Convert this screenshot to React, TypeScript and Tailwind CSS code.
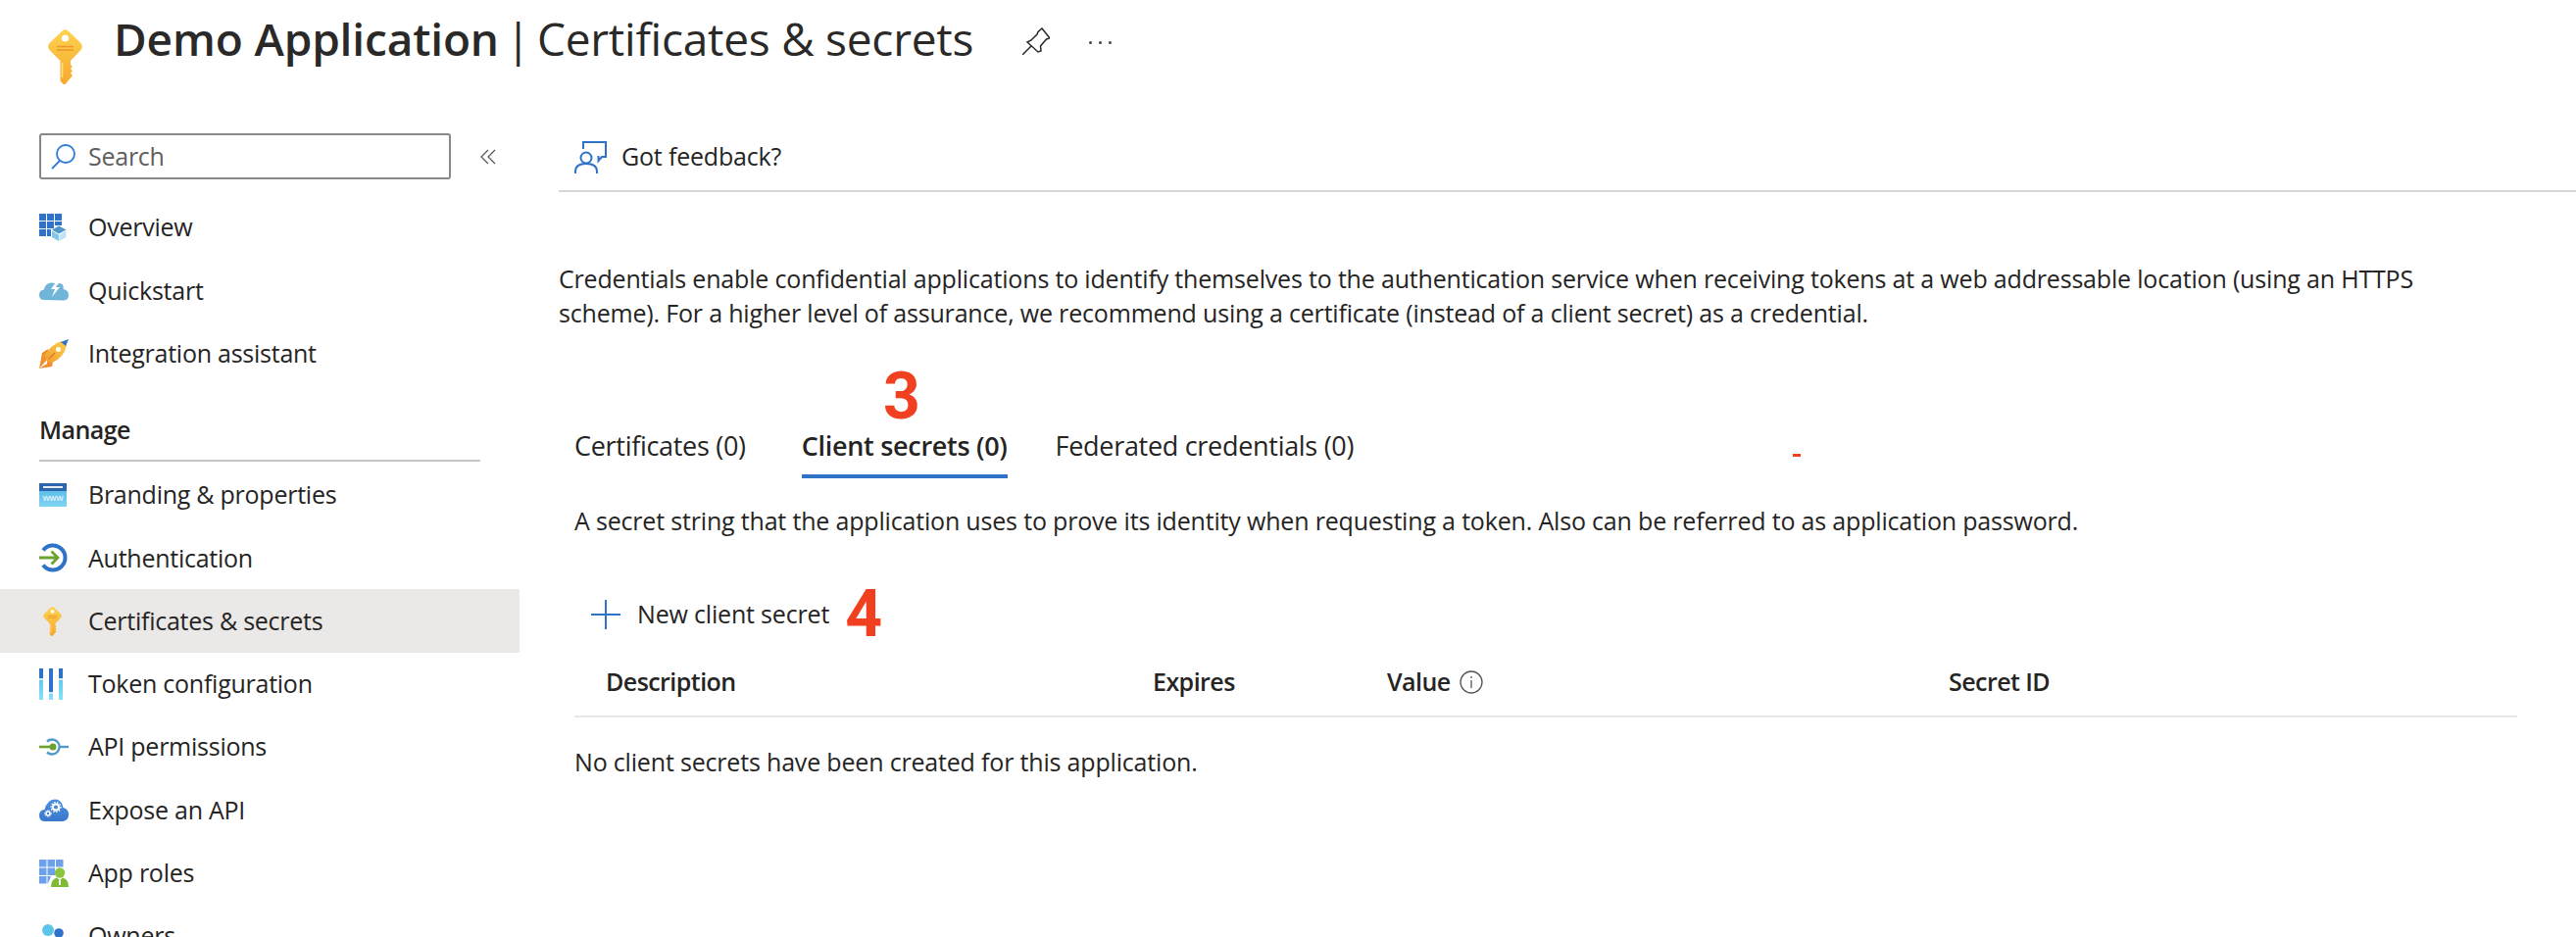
import React from "react";

function KeyIcon(props: { className: string }) {
  return (
    <svg className={props.className} viewBox="0 0 35 56">
      <defs>
        <linearGradient id="keyBody" x1="0" y1="0" x2="0" y2="1">
          <stop offset="0" stopColor="#fcd34f" />
          <stop offset="1" stopColor="#f7a72c" />
        </linearGradient>
      </defs>
      <path
        d="M12.500 52.500V32L2 21.500q-3.500-4 0-8L14.500 1.500q3-2.500 6 0L33 13.500q3.500 4 0 8L23 32v4l2 2-2 2 2 2.500-2 2 2 2.500-7.500 9q-1 .8-2 0z"
        fill="url(#keyBody)"
      />
      <circle cx="17.500" cy="9" r="3.600" fill="#fff" />
      <path d="M9 17.500h17M9 21h17" stroke="#f0962c" strokeWidth="1.500" />
      <path d="M14.500 34v15" stroke="#fde08a" strokeWidth="1.500" />
    </svg>
  );
}

function OverviewIcon() {
  return (
    <svg className="w-[28px] h-[28px]" viewBox="0 0 28 28">
      <path
        d="M0 0h7v7H0zM8 0h7v7H8zM16 0h7v7h-7zM0 8h7v7H0zM8 8h7v7H8zM16 8h7v4h-7zM0 16h7v7H0zM8 16h4v7H8z"
        fill="#2f73c8"
      />
      <path d="M13 16.500l7-4 7.500 4-7.500 4z" fill="#4f97c8" />
      <path d="M13 17.500l7 4V28l-7-4z" fill="#83c6e6" />
      <path d="M27.500 17.500l-7 4V28l7-4z" fill="#bfe5f5" />
    </svg>
  );
}

function QuickstartIcon() {
  return (
    <svg className="w-[30px] h-[22px]" viewBox="0 0 30 22">
      <path
        d="M5 21q-5 0-5-5t5-5.500Q6 4 12 3.500q4-.3 6 2 3-3 6 0 1 2 .5 4.500 5.500 1 5.500 6t-5 5.500z"
        fill="#70b4d8"
      />
      <path d="M19 0l-7 10h4l-3 8 8-10h-4l4-7z" fill="#fff" />
    </svg>
  );
}

function RocketIcon() {
  return (
    <svg className="w-[30px] h-[30px]" viewBox="0 0 30 30">
      <defs>
        <linearGradient id="rocketBody" x1="0" y1="1" x2="1" y2="0">
          <stop offset="0" stopColor="#f29a2e" />
          <stop offset="1" stopColor="#fbd24a" />
        </linearGradient>
      </defs>
      <path d="M9 10L3 14 0 30l8-5zM20 20l-6 3-1 5-13 2 8-9z" fill="#f08f2c" />
      <path d="M5 17Q12 6 22 2l6 4q-2 12-15 18l-3 0z" fill="url(#rocketBody)" />
      <path d="M22 3l8-3-3 7z" fill="#2f73c8" />
      <circle cx="19.500" cy="10.500" r="2.500" fill="#fff" />
      <path d="M10 20l6-6" stroke="#d8762a" strokeWidth="1.200" />
    </svg>
  );
}

function BrandingIcon() {
  return (
    <svg className="w-[28px] h-[24px]" viewBox="0 0 28 24">
      <defs>
        <linearGradient id="brandBody" x1="0" y1="0" x2="0" y2="1">
          <stop offset="0" stopColor="#4fb4e4" />
          <stop offset="1" stopColor="#7fd4f2" />
        </linearGradient>
      </defs>
      <rect width="28" height="24" fill="url(#brandBody)" />
      <rect width="28" height="8" fill="#2e66ad" />
      <rect x="4" y="3" width="20" height="2" fill="#e6eef8" />
      <text x="14" y="18" textAnchor="middle" fontSize="9" fill="#fff" fontFamily="Open Sans, sans-serif">
        www
      </text>
    </svg>
  );
}

function AuthIcon() {
  return (
    <svg className="w-[30px] h-[30px]" viewBox="0 0 30 30">
      <path d="M4 7.500A12.500 12.500 0 1 1 4 22.500" fill="none" stroke="#2f73c8" strokeWidth="4" />
      <path d="M0 15h19M12.500 8.500L19 15l-6.500 6.500" fill="none" stroke="#6ba331" strokeWidth="2.800" />
    </svg>
  );
}

function TokenIcon() {
  return (
    <svg className="w-[25px] h-[32px]" viewBox="0 0 25 32">
      <defs>
        <linearGradient id="tokenLow" x1="0" y1="0" x2="0" y2="1">
          <stop offset="0" stopColor="#4fb9e2" />
          <stop offset="1" stopColor="#88e0f8" />
        </linearGradient>
      </defs>
      <rect x="0" y="0" width="4" height="32" fill="url(#tokenLow)" />
      <rect x="10" y="0" width="4" height="32" fill="url(#tokenLow)" />
      <rect x="20" y="0" width="4" height="32" fill="url(#tokenLow)" />
      <rect x="0" y="0" width="4" height="11" fill="#2f73c8" />
      <rect x="10" y="0" width="4" height="24" fill="#2f73c8" />
      <rect x="20" y="0" width="4" height="11" fill="#2f73c8" />
      <rect x="0" y="10" width="4" height="2" fill="#cfeaf6" />
      <rect x="10" y="24" width="4" height="2" fill="#cfeaf6" />
      <rect x="20" y="10" width="4" height="2" fill="#cfeaf6" />
    </svg>
  );
}

function ApiIcon() {
  return (
    <svg className="w-[30px] h-[18px]" viewBox="0 0 30 18">
      <path d="M8 3.500A7.500 7.500 0 1 1 8 14.500" fill="none" stroke="#4f9ac9" strokeWidth="2.400" />
      <path d="M20 9h10" stroke="#4f9ac9" strokeWidth="2.400" />
      <path d="M0 9h12" stroke="#6ba331" strokeWidth="2.600" />
      <circle cx="14" cy="9" r="3.500" fill="#6ba331" />
    </svg>
  );
}

function ExposeIcon() {
  return (
    <svg className="w-[30px] h-[24px]" viewBox="0 0 30 24">
      <defs>
        <linearGradient id="exposeBody" x1="0" y1="0" x2="0" y2="1">
          <stop offset="0" stopColor="#4a90de" />
          <stop offset="1" stopColor="#3a78cc" />
        </linearGradient>
      </defs>
      <path d="M5 23q-5-.5-5-6t5.500-6Q8 1 16 .500q7 0 8.500 8.500 5.500 1.500 5.500 7t-5.500 7z" fill="url(#exposeBody)" />
      <circle cx="17" cy="8.500" r="3.200" fill="none" stroke="#fff" strokeWidth="2.200" />
      <circle cx="17" cy="8.500" r="5" fill="none" stroke="#fff" strokeWidth="1.200" strokeDasharray="1.500 1.500" />
      <circle cx="9" cy="15" r="2" fill="none" stroke="#fff" strokeWidth="1.600" />
      <circle cx="9" cy="15" r="3.300" fill="none" stroke="#fff" strokeWidth="1" strokeDasharray="1.200 1.200" />
    </svg>
  );
}

function AppRolesIcon() {
  return (
    <svg className="w-[30px] h-[28px]" viewBox="0 0 30 28">
      <path
        d="M0 0h7.500v7.500H0zM8.500 0H16v7.500H8.500zM17 0h7.500v7.500H17zM0 8.500h7.500V16H0zM8.500 8.500H16V16H8.500zM0 17h7.500v7.500H0zM8.500 17H12l-3 7.500H8.500z"
        fill="#6ea1ec"
      />
      <circle cx="21" cy="13.500" r="5.200" fill="#8cc63f" />
      <path d="M12 28q0-8 6-9.500l3 2.500 3-2.500q6 1.500 6 9.500z" fill="#7fb935" />
      <path d="M20 21h2v5h-2z" fill="#fff" />
    </svg>
  );
}

function OwnersIcon() {
  return (
    <svg className="w-[28px] h-[24px]" viewBox="0 0 28 24">
      <circle cx="9" cy="6" r="6" fill="#5bc5e8" />
      <path d="M0 24q0-9 9-10 9 1 9 10z" fill="#4db4e0" />
      <circle cx="20" cy="9" r="4.800" fill="#2f73c8" />
      <path d="M12 24q0-8 8-9 8 1 8 9z" fill="#2f73c8" />
    </svg>
  );
}

const topItems = [
  { label: "Overview", icon: <OverviewIcon /> },
  { label: "Quickstart", icon: <QuickstartIcon /> },
  { label: "Integration assistant", icon: <RocketIcon /> },
];

const manageItems = [
  { label: "Branding & properties", icon: <BrandingIcon /> },
  { label: "Authentication", icon: <AuthIcon /> },
  { label: "Certificates & secrets", icon: <KeyIcon className="w-[19px] h-[30px] ml-[4px]" />, active: true },
  { label: "Token configuration", icon: <TokenIcon /> },
  { label: "API permissions", icon: <ApiIcon /> },
  { label: "Expose an API", icon: <ExposeIcon /> },
  { label: "App roles", icon: <AppRolesIcon /> },
  { label: "Owners", icon: <OwnersIcon /> },
];

function NavRow(props: { label: string; icon: React.ReactNode; active?: boolean }) {
  return (
    <div
      className={
        props.active
          ? "flex items-center h-[64.3px] shrink-0 bg-[#ebe9e7] pl-[40px]"
          : "flex items-center h-[64.3px] shrink-0 pl-[40px]"
      }
    >
      <div className="w-[50px] flex items-center">{props.icon}</div>
      <span className="text-[25px] tracking-[-0.25px] text-[#252423]">{props.label}</span>
    </div>
  );
}

export default function App() {
  return (
    <div className="w-[2628px] h-[956px] overflow-hidden bg-white flex flex-col text-[#252423] tracking-[-0.18px] font-['Open_Sans',sans-serif]">
      <div className="h-[126px] shrink-0 flex items-start pl-[49px] pt-[14px]">
        <KeyIcon className="w-[35px] h-[56px] mt-[16px]" />
        <h1 className="ml-[32px] text-[46px] leading-[50px] text-[#2a2928] whitespace-nowrap flex">
          <span className="font-semibold tracking-[-0.15px]">Demo Application</span>
          <span className="ml-[7px] mr-[7px]">|</span>
          <span className="tracking-[-0.25px]">Certificates &amp; secrets</span>
        </h1>
        <svg className="w-[28px] h-[28px] ml-[50px] mt-[14px]" viewBox="0 0 28 28" fill="none" stroke="#2a2928" strokeWidth="1.500">
          <path d="M0 28l9-9M20 1l8 10-3.500 1-6 7 .5 5-3 1L5 15l4-2 6-6 1-2.500z" />
        </svg>
        <div className="ml-[40px] mt-[28px] flex gap-[7px]">
          <div className="w-[3px] h-[3px] rounded-full bg-[#444]" />
          <div className="w-[3px] h-[3px] rounded-full bg-[#444]" />
          <div className="w-[3px] h-[3px] rounded-full bg-[#444]" />
        </div>
      </div>

      <div className="flex flex-1 min-h-0">
        <div className="w-[530px] shrink-0 flex flex-col pt-[10px]">
          <div className="flex items-center pl-[40px] h-[47px] shrink-0">
            <div className="w-[420px] h-[47px] flex items-center border-2 border-[#8a8886] rounded-[3px] pl-[10px]">
              <svg className="w-[25px] h-[26px]" viewBox="0 0 25 26" fill="none" stroke="#2f7bd8" strokeWidth="1.800">
                <circle cx="15" cy="10" r="9" />
                <path d="M9 17L1 25" />
              </svg>
              <span className="ml-[13px] text-[25px] tracking-[-0.25px] text-[#605e5c]">Search</span>
            </div>
            <svg className="w-[16px] h-[16px] ml-[30px]" viewBox="0 0 16 16" fill="none" stroke="#555" strokeWidth="1.200">
              <path d="M8 1L1 8l7 7M15 1L8 8l7 7" />
            </svg>
          </div>
          <div className="h-[17px] shrink-0" />
          {topItems.map((item) => (
            <NavRow key={item.label} label={item.label} icon={item.icon} />
          ))}
          <div className="ml-[40px] mr-[40px] h-[78px] shrink-0 border-b-2 border-[#c8c6c4] flex items-end pb-[14px]">
            <span className="text-[25px] font-semibold leading-[34px] tracking-[-0.55px] text-[#252423]">Manage</span>
          </div>
          <div className="h-[2px] shrink-0" />
          {manageItems.map((item) => (
            <NavRow key={item.label} label={item.label} icon={item.icon} active={item.active} />
          ))}
        </div>

        <div className="flex-1 min-w-0 ml-[40px] flex flex-col">
          <div className="h-[70px] shrink-0 border-b-2 border-[#d6d6d6] flex items-center pl-[16px]">
            <svg className="w-[33px] h-[33px]" viewBox="0 0 33 33" fill="none" stroke="#2f73c8" strokeWidth="2">
              <path d="M9 8V1h23v15h-4l-3.500 4v-5" />
              <circle cx="12" cy="17" r="5.500" />
              <path d="M1 33v-2q0-8 11-8t11 8v2" />
            </svg>
            <span className="ml-[15px] text-[25px]">Got feedback?</span>
          </div>

          <p className="mt-[71px] text-[25px] leading-[35px] w-[1950px]">
            Credentials enable confidential applications to identify themselves to the authentication service when receiving tokens at a web addressable location (using an HTTPS
            <br />
            scheme). For a higher level of assurance, we recommend using a certificate (instead of a client secret) as a credential.
          </p>

          <div className="mt-[89px] ml-[16px] flex h-[70px] relative text-[27px] tracking-[-0.3px]">
            <div className="pt-[9px] leading-[40px]">Certificates (0)</div>
            <div className="ml-[57px] pt-[9px] leading-[40px] font-semibold border-b-4 border-[#2f73c8] h-[62px]">Client secrets (0)</div>
            <div className="ml-[49px] pt-[9px] leading-[40px]">Federated credentials (0)</div>
            <span className="absolute left-[315px] top-[-56px] font-['Roboto',sans-serif] font-bold text-[66px] leading-[70px] text-[#f0401f]">3</span>
            <div className="absolute left-[1243px] top-[37px] w-[8px] h-[3px] bg-[#f0401f]" />
          </div>

          <p className="ml-[16px] mt-[18px] text-[25px] leading-[35px]">
            A secret string that the application uses to prove its identity when requesting a token. Also can be referred to as application password.
          </p>

          <div className="ml-[33px] mt-[55px] h-[46px] flex items-center">
            <svg className="w-[30px] h-[30px]" viewBox="0 0 30 30" stroke="#2f73c8" strokeWidth="2">
              <path d="M15 0v30M0 15h30" />
            </svg>
            <span className="ml-[17px] text-[25px]">New client secret</span>
            <span className="ml-[16px] font-['Roboto',sans-serif] font-bold text-[66px] leading-[46px] text-[#f0401f]">4</span>
          </div>

          <div className="ml-[16px] mr-[60px] mt-[28px] h-[54px] border-b-2 border-[#e8e8e8] flex items-start font-semibold text-[25px] leading-[35px] tracking-[-0.55px]">
            <span className="ml-[32px] w-[558px]">Description</span>
            <span className="w-[239px]">Expires</span>
            <span className="w-[573px] flex items-center">
              Value
              <svg className="w-[24px] h-[24px] ml-[9px]" viewBox="0 0 24 24" fill="none" stroke="#555" strokeWidth="1.300">
                <circle cx="12" cy="12" r="11" />
                <path d="M12 10v8M12 6v2" />
              </svg>
            </span>
            <span>Secret ID</span>
          </div>

          <p className="ml-[16px] mt-[28px] text-[25px] leading-[35px]">
            No client secrets have been created for this application.
          </p>
        </div>
      </div>
    </div>
  );
}
